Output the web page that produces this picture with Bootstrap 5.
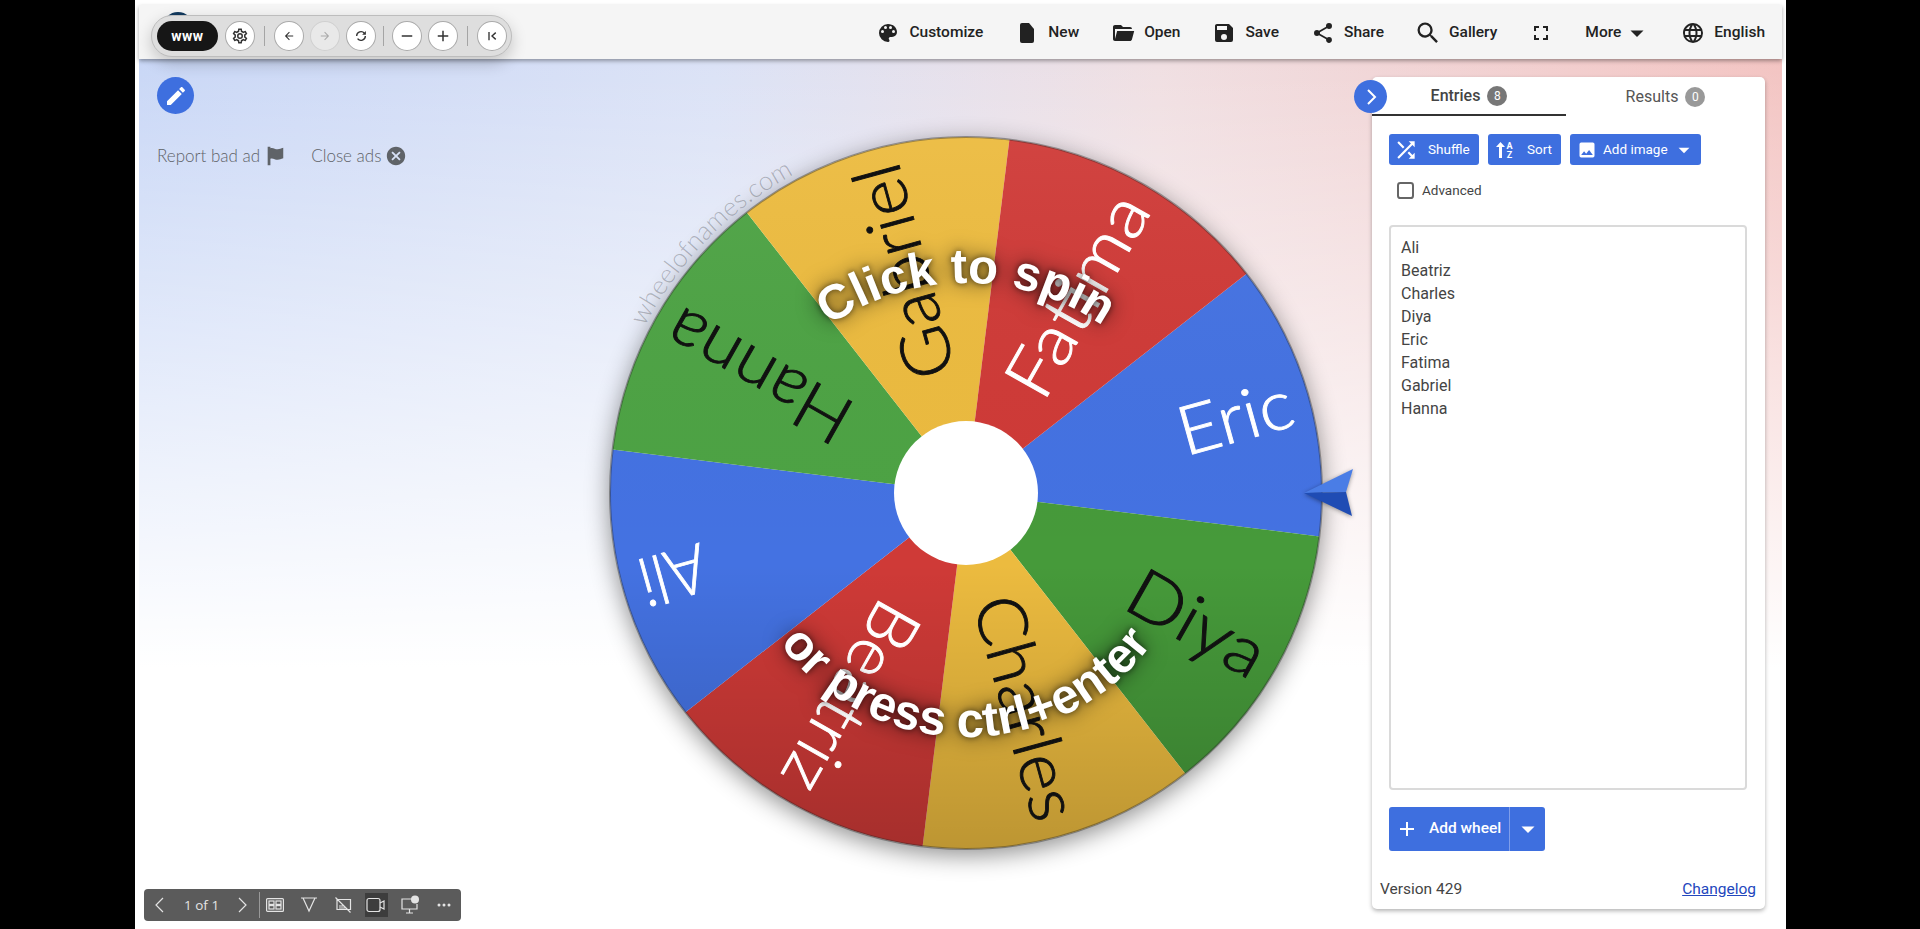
<!DOCTYPE html>
<html lang="en">
  <head>
    <meta charset="UTF-8" />
    <meta name="viewport" content="width=device-width, initial-scale=1.0" />
    <title>Wheel of Names</title>
    <link
      rel="stylesheet"
      href="https://cdn.jsdelivr.net/npm/bootstrap@5.3.0/dist/css/bootstrap.min.css"
    />
    <style>
      html, body { height: 100%; }
      body { background: #000; overflow: hidden; font-family: Roboto, "Liberation Sans", sans-serif; color: #444; }
      .screen { margin-left: 135px; width: 1651px; height: 929px; background: #fff; padding: 5px 4px 0; position: relative; }
      .ico { width: 24px; height: 24px; fill: currentColor; flex: none; }

      .topbar { height: 54px; background: #f5f5f5; padding: 1px 17px 0 0; gap: 32px; box-shadow: 0 2px 4px rgba(0, 0, 0, .35); position: relative; z-index: 2; }
      .topitem { gap: 9px; font-size: 15.5px; font-weight: 500; color: #222; }
      .ico-lg { width: 28px; height: 28px; margin: -2px; }
      .logo-dot { position: absolute; left: 24px; top: 7px; width: 30px; height: 30px; border-radius: 50%; background: #123a5e; }
      .tools { position: absolute; left: 12px; top: 10px; height: 42px; width: 361px; padding: 0 4.5px; gap: 6px; background: #dedede; border: 1.5px solid #bdbdbd; border-radius: 21px; box-shadow: 0 6px 16px rgba(0, 0, 0, .2); }
      .tools-www { width: 62px; height: 30px; margin-right: 1px; border-radius: 15px; background: #161616; color: #fff; font-size: 14px; font-weight: 700; letter-spacing: .5px; }
      .tools-btn { width: 30px; height: 30px; border-radius: 50%; background: #fff; border: 1px solid #aaa; color: #333; }
      .tools-btn.off { background: #e9e9e9; color: #aaa; border-color: #d0d0d0; }
      .tools-btn .ico { width: 18px; height: 18px; }
      .tools-sep { width: 1px; height: 20px; background: #a5a5a5; margin: 0 3px; }
      .tools-sep.tight { margin: 0 1.5px; }

      .stage { height: 870px; position: relative; background: linear-gradient(to bottom, rgba(255, 255, 255, 0) 0, #fff 70%), linear-gradient(to right, #c9d7f6 0, #dbe2f6 35%, #f0dfe2 62%, #f3c4c2 100%); }
      .side-left { width: 427px; padding: 18px 0 0 18px; flex: none; font-family: Lato, sans-serif; font-weight: 300; color: #5f6368; font-size: 17px; }
      .edit-btn { width: 37px; height: 37px; border-radius: 50%; background: #3e6fdf; color: #fff; }
      .edit-btn .ico { width: 24px; height: 24px; }
      .ad-links { margin-top: 32px; height: 20px; gap: 25px; }
      .ad-links .ico { width: 22px; height: 22px; color: #5f6368; }
      .wheel { width: 800px; height: 800px; margin-top: 34px; flex: none; overflow: visible; }
      .slice-label { font-family: Lato, sans-serif; font-weight: 300; font-size: 68px; stroke-width: .9; }
      .spin-text { font-family: "Liberation Sans", sans-serif; font-weight: 700; font-size: 49px; fill: #fff; filter: drop-shadow(0 0 3px rgba(0, 0, 0, .6)) drop-shadow(0 0 10px rgba(0, 0, 0, .6)); }
      .watermark { font-family: Lato, sans-serif; font-weight: 300; font-size: 26px; fill: rgba(0, 0, 0, .24); }

      .panel { width: 393px; height: 832px; margin: 18px 17px 0 6px; flex: none; background: #fff; border-radius: 5px; box-shadow: 0 2px 4px rgba(0, 0, 0, .3); position: relative; }
      .panel-toggle { position: absolute; left: -18px; top: 3px; width: 33px; height: 33px; border-radius: 50%; background: #3e6fdf; color: #fff; z-index: 1; }
      .tab-head { height: 39px; }
      .tab-item { width: 194px; gap: 7px; font-size: 16px; font-weight: 500; color: #444; }
      .tab-item + .tab-item { width: 199px; font-weight: 400; color: #555; }
      .tab-item.on { border-bottom: 2px solid #333; }
      .tab-count { width: 20px; height: 20px; padding: 0; line-height: 20px; font-size: 12px; font-weight: 400; background: #777; }
      .tab-item.off-count .tab-count { background: #999; }
      .act-row { margin: 18px 0 0 17px; gap: 9px; }
      .act-btn { height: 31px; padding: 0 0 0 7px; gap: 9px; font-size: 13.5px; font-weight: 400; background: #3e6fdf; border: 0; color: #fff; border-radius: 3px; }
      .act-btn .ico { width: 20px; height: 20px; }
      .act-btn .ico-shuffle { width: 26px; height: 26px; margin-left: -3px; }
      .act-shuffle { width: 90px; }
      .act-sort { width: 73px; gap: 12px; }
      .act-image { width: 131px; gap: 6px; }
      .adv-row { margin: 17px 0 0 25px; height: 17px; gap: 8px; font-size: 13.5px; }
      .adv-box { width: 17px; height: 17px; margin: 0; border: 2px solid #666; border-radius: 3px; }
      .names { display: block; width: 358px; height: 565px; margin: 26px 0 0 17px; padding: 9px 10px; border: 2px solid #dadada; border-radius: 4px; font-size: 16px; line-height: 23px; color: #444; resize: none; }
      .add-group { margin: 17px 0 0 17px; height: 44px; }
      .add-btn { background: #3e6fdf; color: #fff; border: 0; font-size: 15.5px; font-weight: 500; border-radius: 3px 0 0 3px; width: 121px; padding: 0 0 0 6px; gap: 10px; }
      .add-caret { background: #3e6fdf; color: #fff; border: 0; border-left: 1px solid #7f9eea; border-radius: 0 3px 3px 0; width: 36px; padding: 0; }
      .panel-foot { margin-top: 27px; padding: 0 9px 0 8px; font-size: 15.5px; }
      .panel-foot a { color: #2347bd; }

      .pdf-bar { position: absolute; left: 5px; top: 830px; width: 317px; height: 32px; padding-left: 8px; background: #5b5b5b; border-radius: 4px; color: #e4e4e4; font-size: 13.5px; font-family: "Open Sans", sans-serif; z-index: 3; }
      .pdf-bar svg { flex: none; fill: none; stroke: #e4e4e4; stroke-width: 1.2; }
      .pdf-page { margin: 0 15px 0 16px; white-space: nowrap; }
      .pdf-cell { width: 34px; height: 24px; }
      .pdf-cell.on { background: #3d3d3d; width: 24px; margin: 0 5px; }
      .pdf-sep { width: 1px; height: 26px; background: #999; margin: 0 -2px 0 9px; }
    </style>
  </head>
  <body>
    <svg class="d-none">
      <symbol id="i-palette" viewBox="0 0 24 24"><path d="M17.5,12A1.5,1.5 0 0,1 16,10.5A1.5,1.5 0 0,1 17.5,9A1.5,1.5 0 0,1 19,10.5A1.5,1.5 0 0,1 17.5,12M14.5,8A1.5,1.5 0 0,1 13,6.5A1.5,1.5 0 0,1 14.5,5A1.5,1.5 0 0,1 16,6.5A1.5,1.5 0 0,1 14.5,8M9.5,8A1.5,1.5 0 0,1 8,6.5A1.5,1.5 0 0,1 9.5,5A1.5,1.5 0 0,1 11,6.5A1.5,1.5 0 0,1 9.5,8M6.5,12A1.5,1.5 0 0,1 5,10.5A1.5,1.5 0 0,1 6.5,9A1.5,1.5 0 0,1 8,10.5A1.5,1.5 0 0,1 6.5,12M12,3A9,9 0 0,0 3,12A9,9 0 0,0 12,21A1.5,1.5 0 0,0 13.5,19.5C13.5,19.11 13.35,18.76 13.11,18.5C12.88,18.23 12.73,17.88 12.73,17.5A1.5,1.5 0 0,1 14.23,16H16A5,5 0 0,0 21,11C21,6.58 16.97,3 12,3Z"/></symbol>
      <symbol id="i-file" viewBox="0 0 24 24"><path d="M14 2H7a2 2 0 0 0-2 2v16a2 2 0 0 0 2 2h10a2 2 0 0 0 2-2V8z"/></symbol>
      <symbol id="i-folder" viewBox="0 0 24 24"><path d="M19,20H4C2.89,20 2,19.1 2,18V6C2,4.89 2.89,4 4,4H10L12,6H19A2,2 0 0,1 21,8H21L4,8V18L6.14,10H23.21L20.93,18.5C20.7,19.37 19.92,20 19,20Z"/></symbol>
      <symbol id="i-save" viewBox="0 0 24 24"><path d="M15,9H5V5H15M12,19A3,3 0 0,1 9,16A3,3 0 0,1 12,13A3,3 0 0,1 15,16A3,3 0 0,1 12,19M17,3H5C3.89,3 3,3.9 3,5V19A2,2 0 0,0 5,21H19A2,2 0 0,0 21,19V7L17,3Z"/></symbol>
      <symbol id="i-share" viewBox="0 0 24 24"><path d="M18,16.08C17.24,16.08 16.56,16.38 16.04,16.85L8.91,12.7C8.96,12.47 9,12.24 9,12C9,11.76 8.96,11.53 8.91,11.3L15.96,7.19C16.5,7.69 17.21,8 18,8A3,3 0 0,0 21,5A3,3 0 0,0 18,2A3,3 0 0,0 15,5C15,5.24 15.04,5.47 15.09,5.7L8.04,9.81C7.5,9.31 6.79,9 6,9A3,3 0 0,0 3,12A3,3 0 0,0 6,15C6.79,15 7.5,14.69 8.04,14.19L15.16,18.34C15.11,18.55 15.08,18.77 15.08,19C15.08,20.61 16.39,21.91 18,21.91C19.61,21.91 20.92,20.61 20.92,19A2.92,2.92 0 0,0 18,16.08Z"/></symbol>
      <symbol id="i-search" viewBox="0 0 24 24"><path d="M9.5,3A6.5,6.5 0 0,1 16,9.5C16,11.11 15.41,12.59 14.44,13.73L14.71,14H15.5L20.5,19L19,20.5L14,15.5V14.71L13.73,14.44C12.59,15.41 11.11,16 9.5,16A6.5,6.5 0 0,1 3,9.5A6.5,6.5 0 0,1 9.5,3M9.5,5C7,5 5,7 5,9.5C5,12 7,14 9.5,14C12,14 14,12 14,9.5C14,7 12,5 9.5,5Z"/></symbol>
      <symbol id="i-full" viewBox="0 0 24 24"><path d="M5,5H10V7H7V10H5V5M14,5H19V10H17V7H14V5M17,14H19V19H14V17H17V14M10,17V19H5V14H7V17H10Z"/></symbol>
      <symbol id="i-globe" viewBox="0 0 24 24"><path d="M16.36,14C16.44,13.34 16.5,12.68 16.5,12C16.5,11.32 16.44,10.66 16.36,10H19.74C19.9,10.64 20,11.31 20,12C20,12.69 19.9,13.36 19.74,14M14.59,19.56C15.19,18.45 15.65,17.25 15.97,16H18.92C17.96,17.65 16.43,18.93 14.59,19.56M14.34,14H9.66C9.56,13.34 9.5,12.68 9.5,12C9.5,11.32 9.56,10.65 9.66,10H14.34C14.43,10.65 14.5,11.32 14.5,12C14.5,12.68 14.43,13.34 14.34,14M12,19.96C11.17,18.76 10.5,17.43 10.09,16H13.91C13.5,17.43 12.83,18.76 12,19.96M8,8H5.08C6.03,6.34 7.57,5.06 9.4,4.44C8.8,5.55 8.35,6.75 8,8M5.08,16H8C8.35,17.25 8.8,18.45 9.4,19.56C7.57,18.93 6.03,17.65 5.08,16M4.26,14C4.1,13.36 4,12.69 4,12C4,11.31 4.1,10.64 4.26,10H7.64C7.56,10.66 7.5,11.32 7.5,12C7.5,12.68 7.56,13.34 7.64,14M12,4.03C12.83,5.23 13.5,6.57 13.91,8H10.09C10.5,6.57 11.17,5.23 12,4.03M18.92,8H15.97C15.65,6.75 15.19,5.55 14.59,4.44C16.43,5.07 17.96,6.34 18.92,8M12,2C6.47,2 2,6.5 2,12A10,10 0 0,0 12,22A10,10 0 0,0 22,12A10,10 0 0,0 12,2Z"/></symbol>
      <symbol id="i-caret" viewBox="0 0 24 24"><path d="M7,10L12,15L17,10H7Z" transform="translate(-3.6 -3.6) scale(1.3)"/></symbol>
      <symbol id="i-shuffle" viewBox="0 0 24 24"><path d="M14.83,13.41L13.42,14.82L16.55,17.95L14.5,20H20V14.5L17.96,16.54L14.83,13.41M14.5,4L16.54,6.04L4,18.59L5.41,20L17.96,7.46L20,9.5V4M10.59,9.17L5.41,4L4,5.41L9.17,10.58L10.59,9.17Z"/></symbol>
      <symbol id="i-image" viewBox="0 0 24 24"><path d="M8.5,13.5L11,16.5L14.5,12L19,18H5M21,19V5C21,3.89 20.1,3 19,3H5A2,2 0 0,0 3,5V19A2,2 0 0,0 5,21H19A2,2 0 0,0 21,19Z"/></symbol>
      <symbol id="i-plus" viewBox="0 0 24 24"><path d="M19,13H13V19H11V13H5V11H11V5H13V11H19V13Z"/></symbol>
      <symbol id="i-pencil" viewBox="0 0 24 24"><path d="M20.71,7.04C21.1,6.65 21.1,6 20.71,5.63L18.37,3.29C18,2.9 17.35,2.9 16.96,3.29L15.12,5.12L18.87,8.87M3,17.25V21H6.75L17.81,9.93L14.06,6.18L3,17.25Z"/></symbol>
      <symbol id="i-flag" viewBox="0 0 24 24"><path d="M4,2H7V3.500C10,2.500 12.500,5 15,4.700C17,4.500 18.500,3.700 21,3V14.500C18.500,15.200 17,16 15,16.200C12.500,16.500 10,14 7,15V22H4Z"/></symbol>
      <symbol id="i-close" viewBox="0 0 24 24"><path d="M12,2C17.53,2 22,6.47 22,12C22,17.53 17.53,22 12,22C6.47,22 2,17.53 2,12C2,6.47 6.47,2 12,2M15.59,7L12,10.59L8.41,7L7,8.41L10.59,12L7,15.59L8.41,17L12,13.41L15.59,17L17,15.59L13.41,12L17,8.41L15.59,7Z"/></symbol>
      <symbol id="i-cog" viewBox="0 0 24 24"><path d="M12,8A4,4 0 0,1 16,12A4,4 0 0,1 12,16A4,4 0 0,1 8,12A4,4 0 0,1 12,8M12,10A2,2 0 0,0 10,12A2,2 0 0,0 12,14A2,2 0 0,0 14,12A2,2 0 0,0 12,10M10,22C9.75,22 9.54,21.82 9.5,21.58L9.13,18.93C8.5,18.68 7.96,18.34 7.44,17.94L4.95,18.95C4.73,19.03 4.46,18.95 4.34,18.73L2.34,15.27C2.21,15.05 2.27,14.78 2.46,14.63L4.57,12.97L4.5,12L4.57,11L2.46,9.37C2.27,9.22 2.21,8.95 2.34,8.73L4.34,5.27C4.46,5.05 4.73,4.96 4.95,5.05L7.44,6.05C7.96,5.66 8.5,5.32 9.13,5.07L9.5,2.42C9.54,2.18 9.75,2 10,2H14C14.25,2 14.46,2.18 14.5,2.42L14.87,5.07C15.5,5.32 16.04,5.66 16.56,6.05L19.05,5.05C19.27,4.96 19.54,5.05 19.66,5.27L21.66,8.73C21.79,8.95 21.73,9.22 21.54,9.37L19.43,11L19.5,12L19.43,13L21.54,14.63C21.73,14.78 21.79,15.05 21.66,15.27L19.66,18.73C19.54,18.95 19.27,19.04 19.05,18.95L16.56,17.95C16.04,18.34 15.5,18.68 14.87,18.93L14.5,21.58C14.46,21.82 14.25,22 14,22H10M11.25,4L10.88,6.61C9.68,6.86 8.62,7.5 7.85,8.39L5.44,7.35L4.69,8.65L6.8,10.2C6.4,11.37 6.4,12.64 6.8,13.8L4.68,15.36L5.43,16.66L7.86,15.62C8.63,16.5 9.68,17.14 10.87,17.38L11.24,20H12.76L13.13,17.39C14.32,17.14 15.37,16.5 16.14,15.62L18.57,16.66L19.32,15.36L17.2,13.81C17.6,12.64 17.6,11.37 17.2,10.2L19.31,8.65L18.56,7.35L16.15,8.39C15.38,7.5 14.32,6.86 13.13,6.62L12.75,4H11.25Z"/></symbol>
      <symbol id="i-left" viewBox="0 0 24 24"><path d="M20,11V13H8L13.5,18.5L12.08,19.92L4.16,12L12.08,4.08L13.5,5.5L8,11H20Z" transform="translate(3.6 3.6) scale(.7)"/></symbol>
      <symbol id="i-right" viewBox="0 0 24 24"><path d="M4,11V13H16L10.5,18.5L11.92,19.92L19.84,12L11.92,4.08L10.5,5.5L16,11H4Z" transform="translate(3.6 3.6) scale(.7)"/></symbol>
      <symbol id="i-reload" viewBox="0 0 24 24"><path d="M6.2 12a5.8 5.8 0 0 1 10.4-3.5M17.8 12a5.8 5.8 0 0 1-10.4 3.5" fill="none" stroke="currentColor" stroke-width="1.8"/><path d="M18.5 5.2v5h-5z"/></symbol>
      <symbol id="i-minus" viewBox="0 0 24 24"><path d="M5,11H19V13H5Z"/></symbol>
      <symbol id="i-back" viewBox="0 0 24 24"><path d="M8 6.500v11M17 7.500L12 12l5 4.500" fill="none" stroke="currentColor" stroke-width="1.8"/></symbol>
    </svg>

    <div class="screen">
      <nav class="topbar d-flex align-items-center justify-content-end">
        <div class="logo-dot"></div>
        <div class="tools d-flex align-items-center">
          <div class="tools-www d-flex align-items-center justify-content-center">www</div>
          <div class="tools-btn d-flex align-items-center justify-content-center"><svg class="ico"><use href="#i-cog"/></svg></div>
          <div class="tools-sep"></div>
          <div class="tools-btn d-flex align-items-center justify-content-center"><svg class="ico"><use href="#i-left"/></svg></div>
          <div class="tools-btn off d-flex align-items-center justify-content-center"><svg class="ico"><use href="#i-right"/></svg></div>
          <div class="tools-btn d-flex align-items-center justify-content-center"><svg class="ico"><use href="#i-reload"/></svg></div>
          <div class="tools-sep tight"></div>
          <div class="tools-btn d-flex align-items-center justify-content-center"><svg class="ico"><use href="#i-minus"/></svg></div>
          <div class="tools-btn d-flex align-items-center justify-content-center"><svg class="ico"><use href="#i-plus"/></svg></div>
          <div class="tools-sep"></div>
          <div class="tools-btn d-flex align-items-center justify-content-center"><svg class="ico"><use href="#i-back"/></svg></div>
        </div>
        <div class="topitem d-flex align-items-center"><svg class="ico"><use href="#i-palette"/></svg>Customize</div>
        <div class="topitem d-flex align-items-center"><svg class="ico"><use href="#i-file"/></svg>New</div>
        <div class="topitem d-flex align-items-center"><svg class="ico"><use href="#i-folder"/></svg>Open</div>
        <div class="topitem d-flex align-items-center"><svg class="ico"><use href="#i-save"/></svg>Save</div>
        <div class="topitem d-flex align-items-center"><svg class="ico"><use href="#i-share"/></svg>Share</div>
        <div class="topitem d-flex align-items-center"><svg class="ico ico-lg"><use href="#i-search"/></svg>Gallery</div>
        <div class="topitem d-flex align-items-center"><svg class="ico"><use href="#i-full"/></svg></div>
        <div class="topitem d-flex align-items-center gap-1">More<svg class="ico"><use href="#i-caret"/></svg></div>
        <div class="topitem d-flex align-items-center"><svg class="ico"><use href="#i-globe"/></svg>English</div>
      </nav>

      <main class="stage d-flex">
        <div class="side-left">
          <div class="edit-btn d-flex align-items-center justify-content-center"><svg class="ico"><use href="#i-pencil"/></svg></div>
          <div class="ad-links d-flex align-items-center">
            <div class="d-flex align-items-center gap-1">Report bad ad <svg class="ico"><use href="#i-flag"/></svg></div>
            <div class="d-flex align-items-center gap-1">Close ads <svg class="ico"><use href="#i-close"/></svg></div>
          </div>
        </div>

        <svg class="wheel" id="wheel" viewBox="-400 -400 800 800"></svg>

        <aside class="panel d-flex flex-column">
          <div class="panel-toggle d-flex align-items-center justify-content-center">
            <svg width="20" height="20" viewBox="0 0 20 20" fill="none" stroke="currentColor" stroke-width="2"><path d="M7 3l7 7-7 7"/></svg>
          </div>
          <div class="tab-head d-flex">
            <div class="tab-item on d-flex align-items-center justify-content-center">Entries <span class="badge rounded-pill tab-count">8</span></div>
            <div class="tab-item off-count d-flex align-items-center justify-content-center">Results <span class="badge rounded-pill tab-count">0</span></div>
          </div>
          <div class="act-row d-flex">
            <button class="btn act-btn act-shuffle d-flex align-items-center"><svg class="ico ico-shuffle"><use href="#i-shuffle"/></svg>Shuffle</button>
            <button class="btn act-btn act-sort d-flex align-items-center">
              <svg class="ico" viewBox="0 0 20 20"><path d="M4.5 2L9 7H6v11H3V7H0z" transform="translate(1 0)"/><text x="14.5" y="9" text-anchor="middle" font-size="9" font-weight="700" font-family="Roboto, sans-serif" fill="#fff">A</text><text x="14.5" y="18" text-anchor="middle" font-size="9" font-weight="700" font-family="Roboto, sans-serif" fill="#fff">Z</text></svg>
              Sort
            </button>
            <button class="btn act-btn act-image d-flex align-items-center"><svg class="ico"><use href="#i-image"/></svg>Add image<svg class="ico"><use href="#i-caret"/></svg></button>
          </div>
          <label class="adv-row d-flex align-items-center">
            <input class="form-check-input adv-box" type="checkbox" />Advanced
          </label>
          <textarea class="form-control names" spellcheck="false">Ali
Beatriz
Charles
Diya
Eric
Fatima
Gabriel
Hanna</textarea>
          <div class="btn-group add-group align-self-start">
            <button class="btn add-btn d-flex align-items-center"><svg class="ico"><use href="#i-plus"/></svg>Add wheel</button>
            <button class="btn add-caret d-flex align-items-center justify-content-center"><svg class="ico"><use href="#i-caret"/></svg></button>
          </div>
          <div class="panel-foot d-flex justify-content-between">
            <span>Version 429</span><a href="#">Changelog</a>
          </div>
        </aside>

        <div class="pdf-bar d-flex align-items-center">
          <svg width="16" height="20" viewBox="0 0 16 20"><path d="M11 3L4 10l7 7"/></svg>
          <span class="pdf-page">1 of 1</span>
          <svg width="16" height="20" viewBox="0 0 16 20"><path d="M5 3l7 7-7 7"/></svg>
          <div class="pdf-sep"></div>
          <div class="pdf-cell d-flex align-items-center justify-content-center"><svg width="18" height="16" viewBox="0 0 18 16"><rect x=".6" y="1.6" width="16.8" height="12.8" rx="1"/><rect x="3" y="4" width="5" height="3.4"/><rect x="10" y="4" width="5" height="3.4"/><rect x="3" y="8.6" width="5" height="3.4"/><rect x="10" y="8.6" width="5" height="3.4"/></svg></div>
          <div class="pdf-cell d-flex align-items-center justify-content-center"><svg width="18" height="18" viewBox="0 0 18 18"><path d="M1 2h16M3 2l6 13 6-13"/></svg></div>
          <div class="pdf-cell d-flex align-items-center justify-content-center"><svg width="18" height="18" viewBox="0 0 18 18"><path d="M3 3.5h13.5v10H3zM5 10h5M5 12h7M1.5 1.5l15 15"/></svg></div>
          <div class="pdf-cell on d-flex align-items-center justify-content-center"><svg width="20" height="16" viewBox="0 0 20 16"><rect x="1" y="1.5" width="13" height="13" rx="2"/><path d="M14 6l4-2v8l-4-2"/></svg></div>
          <div class="pdf-cell d-flex align-items-center justify-content-center"><svg width="20" height="20" viewBox="0 0 20 20"><path d="M13 4H2v10h15v-5M9.500 14v4M6 18h7"/><circle cx="15" cy="4.500" r="4" fill="#e4e4e4" stroke="none"/></svg></div>
          <div class="pdf-cell d-flex align-items-center justify-content-center"><svg width="16" height="6" viewBox="0 0 16 6"><circle cx="3" cy="3" r="1.500" fill="#e4e4e4" stroke="none"/><circle cx="8" cy="3" r="1.500" fill="#e4e4e4" stroke="none"/><circle cx="13" cy="3" r="1.500" fill="#e4e4e4" stroke="none"/></svg></div>
        </div>
      </main>
    </div>

    <script src="https://cdn.jsdelivr.net/npm/bootstrap@5.3.0/dist/js/bootstrap.bundle.min.js"></script>
    <script>
      const R = 356;
      const slices = [
        { name: "Eric", color: "#4472e2", ink: "#fff", width: 117, end: 338 },
        { name: "Diya", color: "#469a3a", ink: "#111", width: 149, end: 340 },
        { name: "Charles", color: "#ecbb3f", ink: "#111", width: 230, end: 338 },
        { name: "Beatriz", color: "#cf3a37", ink: "#fff", width: 208, end: 338 },
        { name: "Ali", color: "#4472e2", ink: "#fff", width: 68, end: 338 },
        { name: "Hanna", color: "#4da344", ink: "#111", width: 203, end: 340 },
        { name: "Gabriel", color: "#ecbb3f", ink: "#111", width: 220, end: 340 },
        { name: "Fatima", color: "#cf3a37", ink: "#fff", width: 222, end: 338 },
      ];

      const pt = (deg, r) => {
        const a = (deg * Math.PI) / 180;
        return `${(r * Math.cos(a)).toFixed(2)} ${(r * Math.sin(a)).toFixed(2)}`;
      };

      let html = `
        <defs>
          <linearGradient id="shade" x1="0" y1="0" x2="0" y2="1">
            <stop offset="0" stop-color="#fff" stop-opacity=".05"/>
            <stop offset=".6" stop-color="#000" stop-opacity="0"/>
            <stop offset="1" stop-color="#000" stop-opacity=".2"/>
          </linearGradient>
          <path id="arc-top" d="M -240 30 A 240 240 0 0 1 240 30"/>
          <path id="arc-bottom" d="M -232 12 A 232 232 0 0 0 232 12"/>
          <path id="arc-mark" d="M ${pt(201, 362)} A 362 362 0 0 1 ${pt(248, 362)}"/>
        </defs>
        <circle r="${R}" fill="#fff" style="filter: drop-shadow(0 6px 12px rgba(0,0,0,.45))"/>`;

      slices.forEach((s, i) => {
        const from = -38 + i * 45;
        html += `<path d="M0 0 L ${pt(from, R)} A ${R} ${R} 0 0 1 ${pt(from + 45, R)} Z" fill="${s.color}"/>`;
      });
      html += `<circle r="${R}" fill="url(#shade)"/>`;
      slices.forEach((s, i) => {
        const mid = -15.5 + i * 45;
        html += `<text class="slice-label" transform="rotate(${mid})" x="${s.end}" dy=".34em" text-anchor="end" fill="${s.ink}" stroke="${s.ink}" textLength="${s.width}" lengthAdjust="spacingAndGlyphs">${s.name}</text>`;
      });
      html += `
        <circle r="${R}" fill="none" stroke="rgba(40,40,40,.4)" stroke-width="2"/>
        <circle r="72" fill="#fff"/>
        <text class="watermark"><textPath href="#arc-mark" startOffset="50%" text-anchor="middle">wheelofnames.com</textPath></text>
        <text class="spin-text"><textPath href="#arc-top" startOffset="50%" text-anchor="middle">Click to spin</textPath></text>
        <text class="spin-text"><textPath href="#arc-bottom" startOffset="50%" text-anchor="middle">or press ctrl+enter</textPath></text>
        <g style="filter: drop-shadow(0 1px 2px rgba(0,0,0,.4))">
          <polygon points="338,0 387,-24 380,-1" fill="#4a7de6"/>
          <polygon points="338,0 380,-1 386,23" fill="#1f4cb4"/>
        </g>`;
      document.getElementById("wheel").innerHTML = html;
    </script>
  </body>
</html>
